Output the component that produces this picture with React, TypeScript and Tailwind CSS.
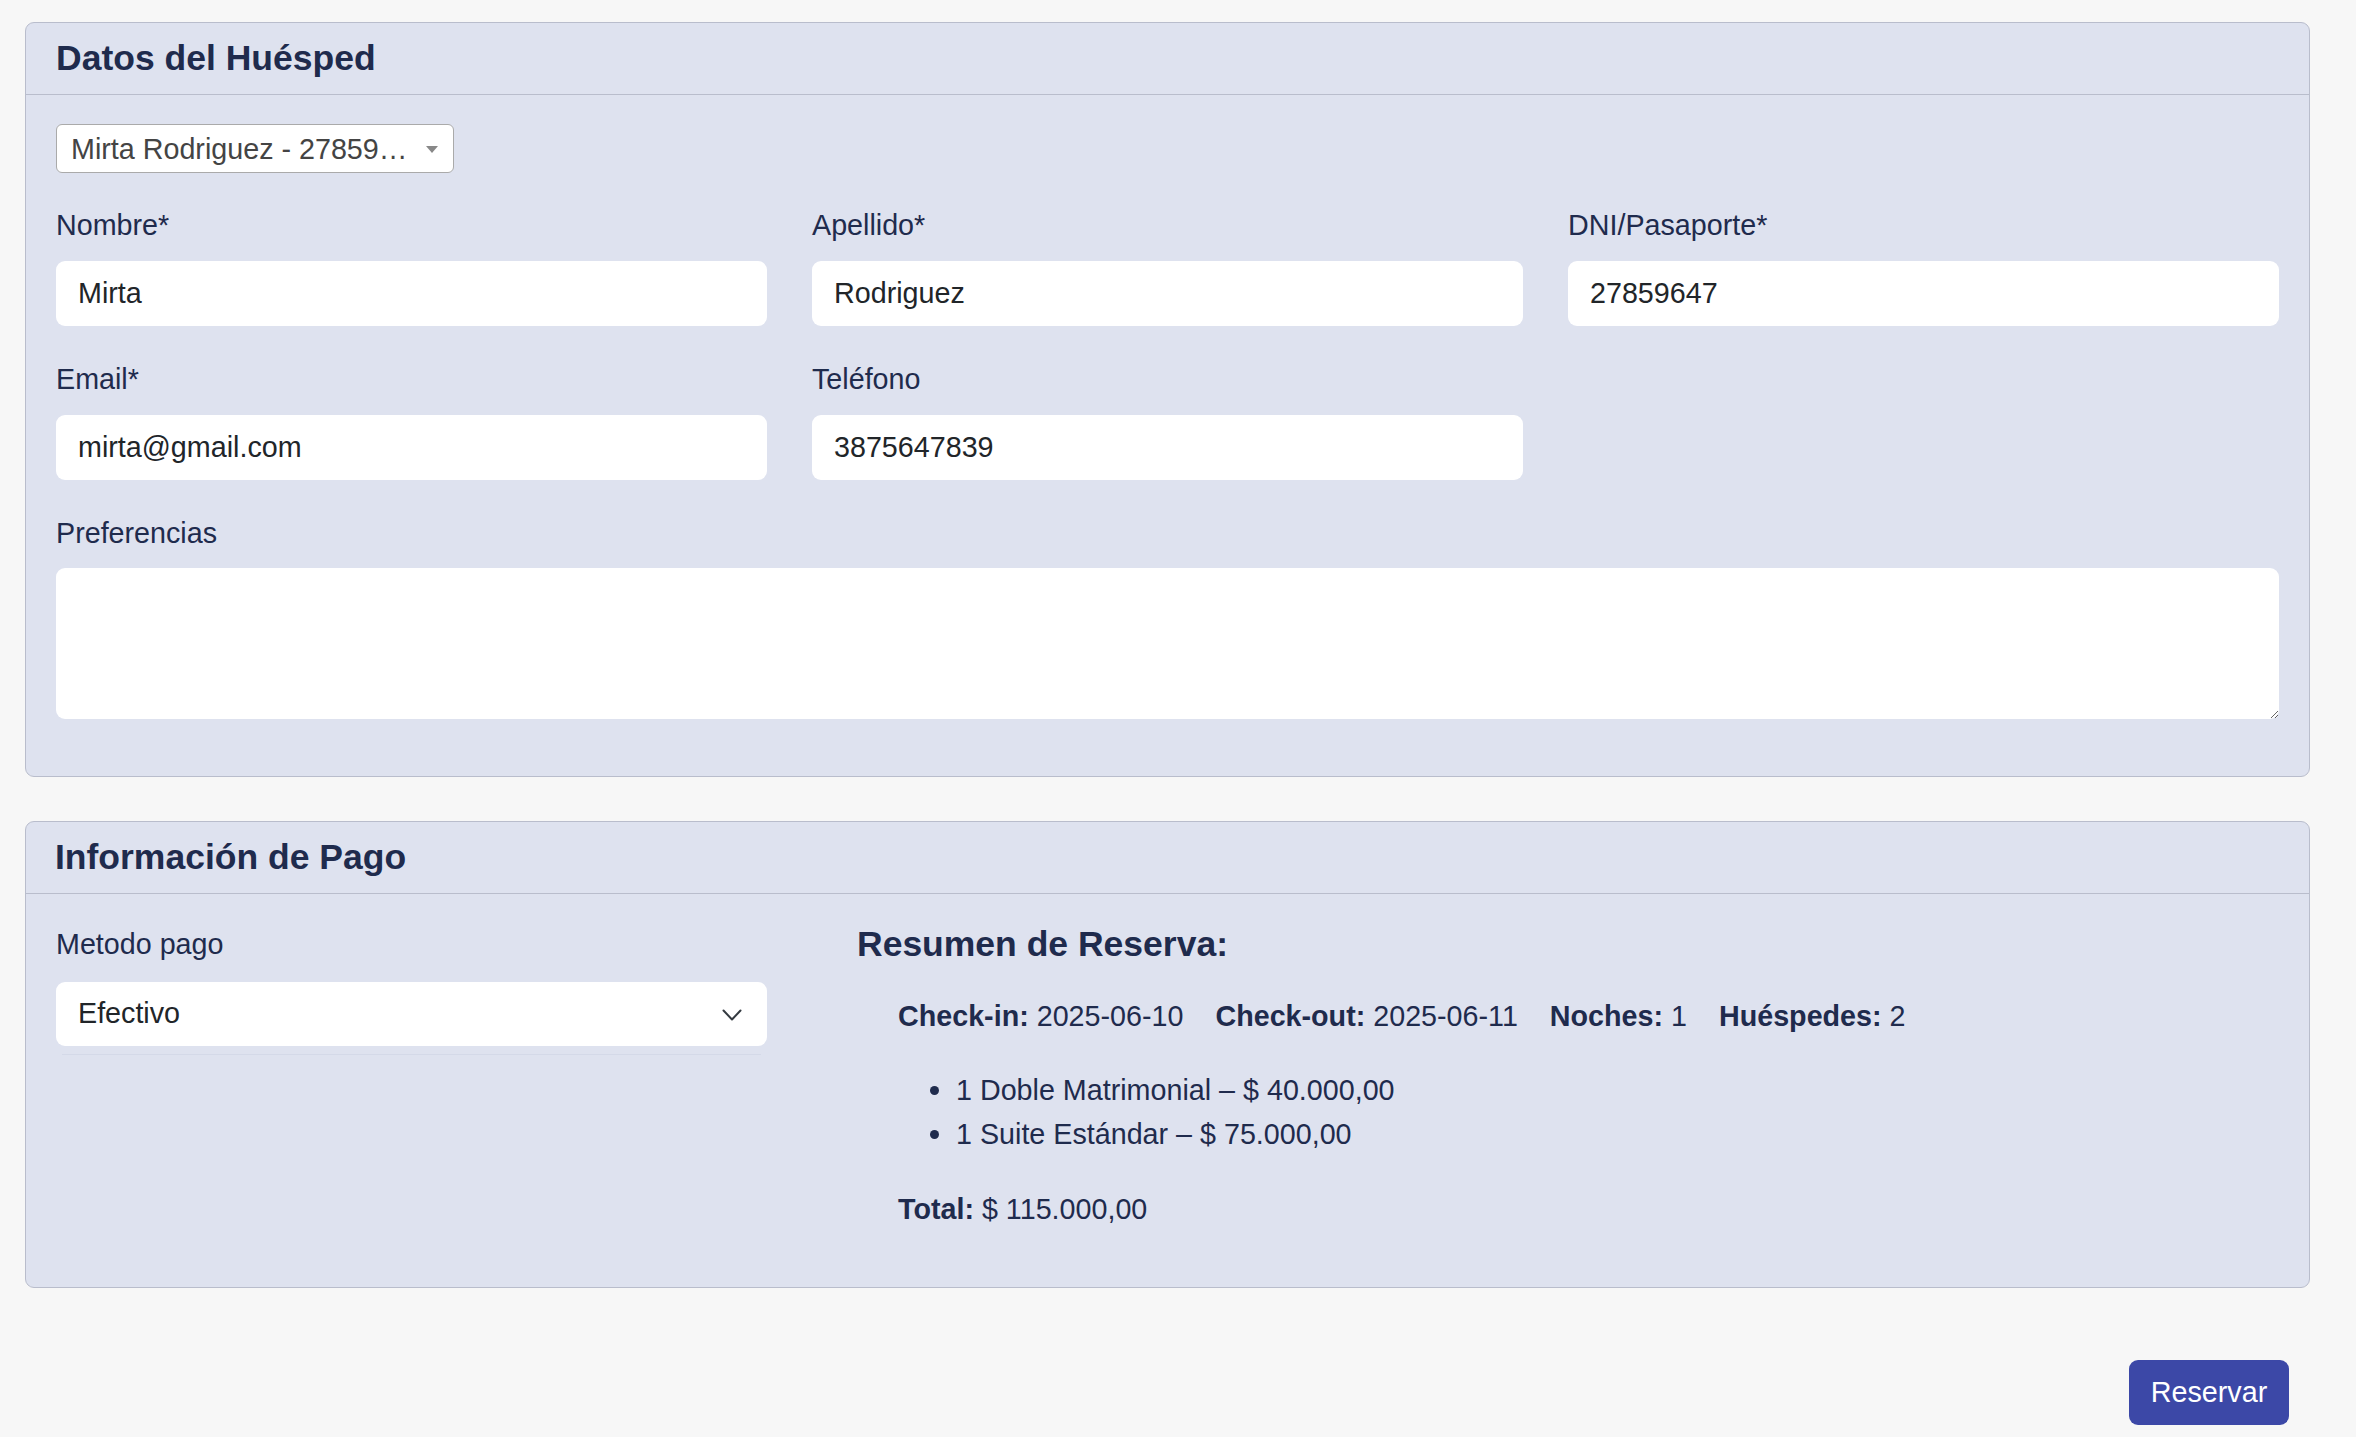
import React from "react";

const labelCls = "block text-[28.7px] leading-[42.75px] text-[#1f2b4d] mb-[14px]";
const inputCls =
  "block w-full h-[65px] rounded-[9px] bg-white px-[22px] text-[28.7px] text-[#212529] outline-none border-0";

function Field({ label, value }: { label: string; value: string }) {
  return (
    <div>
      <label className={labelCls}>{label}</label>
      <input className={inputCls} defaultValue={value} readOnly />
    </div>
  );
}

export default function App() {
  return (
    <div className="min-h-screen bg-[#f7f7f7] pt-[22px] pl-[25px] pb-[13px] font-['Liberation_Sans',Arial,sans-serif]">
      <div className="w-[2285px]">
        {/* Card 1 */}
        <section className="rounded-[9px] border border-[#b9bdcc] bg-[#dee2ef]">
          <div className="flex h-[72px] items-center border-b border-[#b9bdcc] pl-[30px]">
            <h2 className="text-[35.5px] font-bold leading-[1.2] text-[#1f2b4d]">Datos del Huésped</h2>
          </div>
          <div className="px-[30px] pt-[29px] pb-[57px]">
            <div className="relative flex h-[49px] w-[398px] items-center rounded-[6px] border border-[#aaaaaa] bg-white pl-[14px] pt-[3px] text-[28.7px] text-[#444444]">
              <span className="whitespace-nowrap">Mirta Rodriguez - 27859…</span>
              <span className="absolute right-[15px] top-[21px] h-0 w-0 border-x-[6px] border-t-[7px] border-x-transparent border-t-[#888888]" />
            </div>
            <div className="mt-[31px] grid grid-cols-3 gap-x-[45px] gap-y-[32px]">
              <Field label="Nombre*" value="Mirta" />
              <Field label="Apellido*" value="Rodriguez" />
              <Field label="DNI/Pasaporte*" value="27859647" />
              <Field label="Email*" value="mirta@gmail.com" />
              <Field label="Teléfono" value="3875647839" />
              <div />
              <div className="col-span-3">
                <label className={labelCls}>Preferencias</label>
                <textarea className="block h-[151px] w-full rounded-[9px] border-0 bg-white px-[22px] py-[12px] text-[28.7px] text-[#212529] outline-none" />
              </div>
            </div>
          </div>
        </section>

        {/* Card 2 */}
        <section className="mt-[44px] rounded-[9px] border border-[#b9bdcc] bg-[#dee2ef]">
          <div className="flex h-[72px] items-center border-b border-[#b9bdcc] pl-[29px]">
            <h2 className="text-[35.5px] font-bold leading-[1.2] text-[#1f2b4d]">Información de Pago</h2>
          </div>
          <div className="grid grid-cols-[711px_1fr] gap-x-[90px] px-[30px] pt-[29px] pb-[57px]">
            <div>
              <label className="block text-[28.7px] leading-[42.75px] text-[#1f2b4d] mb-[16px]">Metodo pago</label>
              <div className="relative">
                <select
                  className="block h-[64px] w-full appearance-none rounded-[9px] border-0 bg-white pl-[22px] pr-[60px] text-[28.7px] text-[#212529] outline-none"
                  defaultValue="Efectivo"
                >
                  <option>Efectivo</option>
                  <option>Tarjeta</option>
                  <option>Transferencia</option>
                </select>
                <svg
                  className="pointer-events-none absolute right-[25px] top-[27px]"
                  width="20"
                  height="12"
                  viewBox="0 0 20 12"
                  fill="none"
                >
                  <polyline points="1.5,1.5 10,10.5 18.5,1.5" stroke="#343a40" strokeWidth="2" strokeLinecap="round" strokeLinejoin="round" />
                </svg>
              </div>
              <div className="mx-[6px] mt-[8px] h-px bg-[#d4d9e8]" />
            </div>
            <div className="text-[#1f2b4d]">
              <h3 className="text-[35.5px] font-bold leading-[1.2]">Resumen de Reserva:</h3>
              <div className="pl-[41px] text-[28.7px] leading-[42.75px]">
                <div className="mt-[29px] flex gap-x-[32px] whitespace-nowrap">
                  <span>
                    <b>Check-in:</b> 2025-06-10
                  </span>
                  <span>
                    <b>Check-out:</b> 2025-06-11
                  </span>
                  <span>
                    <b>Noches:</b> 1
                  </span>
                  <span>
                    <b>Huéspedes:</b> 2
                  </span>
                </div>
                <ul className="mt-[31px] pl-[32px]">
                  <li className="flex h-[44px] items-center">
                    <span className="mr-[17px] h-[9px] w-[9px] rounded-full bg-[#1f2b4d]" />
                    <span>1 Doble Matrimonial – $ 40.000,00</span>
                  </li>
                  <li className="flex h-[44px] items-center">
                    <span className="mr-[17px] h-[9px] w-[9px] rounded-full bg-[#1f2b4d]" />
                    <span>1 Suite Estándar – $ 75.000,00</span>
                  </li>
                </ul>
                <div className="mt-[31px]">
                  <b>Total:</b> $ 115.000,00
                </div>
              </div>
            </div>
          </div>
        </section>

        <div className="mt-[72px] flex justify-end pr-[21px]">
          <button className="flex h-[65px] w-[160px] items-center justify-center rounded-[9px] bg-[#3c48a7] text-[28.7px] text-white">
            Reservar
          </button>
        </div>
      </div>
    </div>
  );
}
